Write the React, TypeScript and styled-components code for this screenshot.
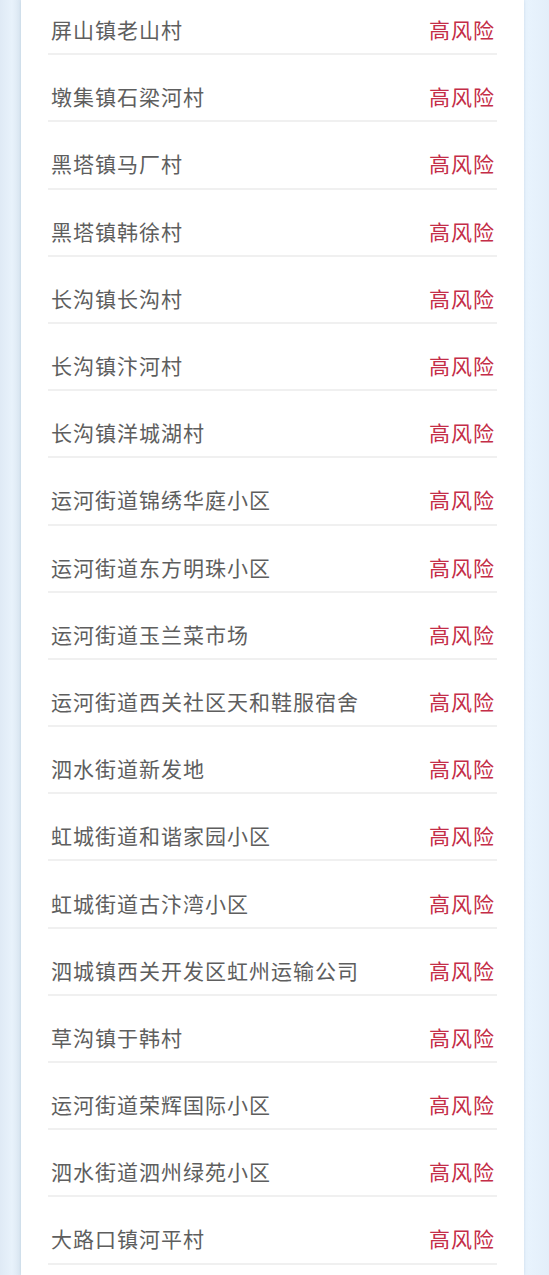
import styled, { createGlobalStyle } from "styled-components";

const GlobalStyle = createGlobalStyle`
  html, body {
    margin: 0;
    padding: 0;
    background: #e6f1fb;
  }
  body {
    font-family: "Noto Sans CJK SC", "Noto Sans", sans-serif;
  }
`;

const Page = styled.div`
  height: 1275px;
  overflow: hidden;
  display: flex;
  justify-content: center;
  background: linear-gradient(
    to right,
    #dfeaf5 0px,
    #e8f2fb 12px,
    #dbe7f2 20px,
    #e8f3fd 528px,
    #e3eef9 549px
  );
`;

const Card = styled.div`
  width: 503px;
  margin-left: -4px;
  background: #ffffff;
  box-shadow: 0 0 3px rgba(150, 175, 200, 0.35);
  padding: 0 27px 0 27px;
  box-sizing: border-box;
`;

const List = styled.ul`
  list-style: none;
  margin: -12px 0 0 0;
  padding: 0;
`;

const Row = styled.li`
  height: 67.2px;
  box-sizing: border-box;
  display: flex;
  align-items: center;
  justify-content: space-between;
  padding: 17px 2px 0 3px;
  border-bottom: 2px solid #f0f0f0;
`;

const Name = styled.span`
  font-size: 21px;
  color: #5e5e5e;
  letter-spacing: 1px;
`;

const Level = styled.span<{ $color: string }>`
  font-size: 21px;
  color: ${(p) => p.$color};
  letter-spacing: 1px;
`;

const places = [
  "屏山镇老山村",
  "墩集镇石梁河村",
  "黑塔镇马厂村",
  "黑塔镇韩徐村",
  "长沟镇长沟村",
  "长沟镇汴河村",
  "长沟镇洋城湖村",
  "运河街道锦绣华庭小区",
  "运河街道东方明珠小区",
  "运河街道玉兰菜市场",
  "运河街道西关社区天和鞋服宿舍",
  "泗水街道新发地",
  "虹城街道和谐家园小区",
  "虹城街道古汴湾小区",
  "泗城镇西关开发区虹州运输公司",
  "草沟镇于韩村",
  "运河街道荣辉国际小区",
  "泗水街道泗州绿苑小区",
  "大路口镇河平村",
];

export default function App() {
  return (
    <>
      <GlobalStyle />
      <Page>
        <Card>
          <List>
            {places.map((p) => (
              <Row key={p}>
                <Name>{p}</Name>
                <Level $color="#c42d47">高风险</Level>
              </Row>
            ))}
          </List>
        </Card>
      </Page>
    </>
  );
}
